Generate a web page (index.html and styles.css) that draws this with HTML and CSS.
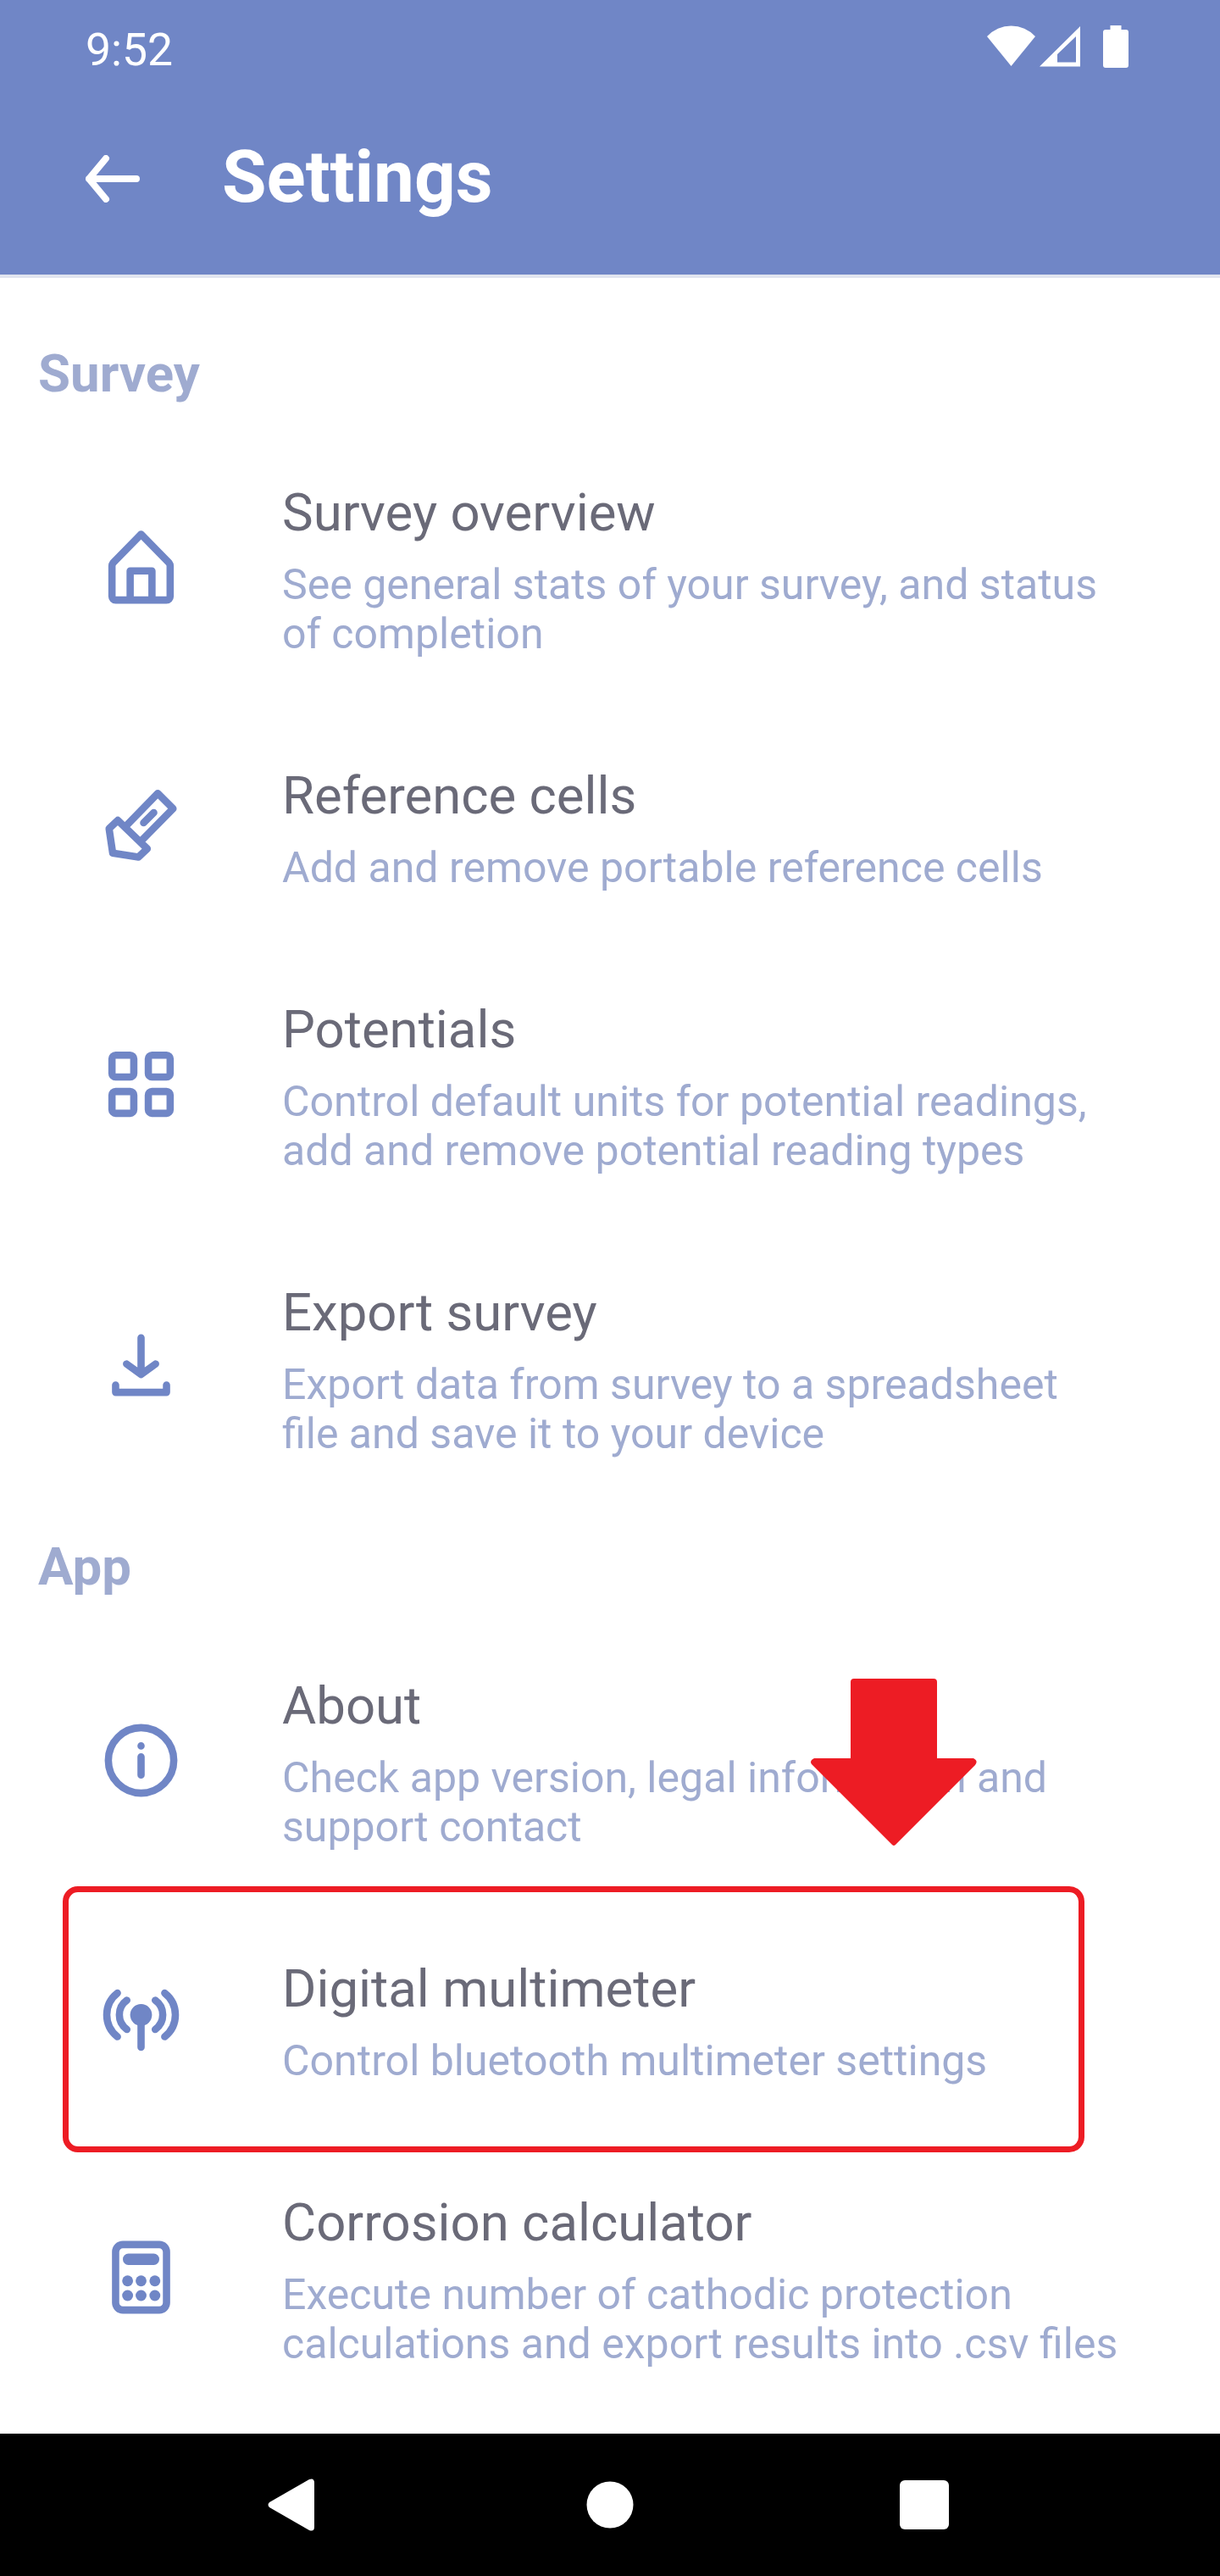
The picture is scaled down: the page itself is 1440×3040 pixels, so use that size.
FILE: index.html
```html
<!DOCTYPE html>
<html lang="en">
<head>
<meta charset="utf-8">
<title>Settings</title>
<link rel="stylesheet" href="styles.css">
</head>
<body>
<div class="screen">
  <header class="header">
    <div class="status">
      <span class="clock">9:52</span>
      <svg class="status-icons" width="170" height="54" viewBox="0 0 170 54" fill="#fff">
        <path d="M0 16A38.700 38.700 0 0 1 57 16L28.500 51Z"/>
        <path fill-rule="evenodd" d="M62 51.500 110 4v47.500ZM83 37v9.500h22V16Z"/>
        <path d="M145.500 3h13v5h5.500a3 3 0 0 1 3 3v39a3 3 0 0 1-3 3h-24a3 3 0 0 1-3-3V11a3 3 0 0 1 3-3h5.500Z"/>
      </svg>
    </div>
    <div class="toolbar">
      <svg class="back" width="64" height="56" viewBox="0 0 64 56"><path d="M24 4 4 28 24 52M4 28H60"/></svg>
      <h1 class="title">Settings</h1>
    </div>
  </header>

  <main class="content">
    <h2 class="section">Survey</h2>
    <div class="item">
      <svg class="icon" viewBox="0 0 24 24"><path d="M12 2.900 4.300 10.800Q4 11.200 4 11.600V20a1 1 0 0 0 1 1h14a1 1 0 0 0 1-1v-8.400q0-.4-.3-.8ZM9 21v-8h6v8"/></svg>
      <div class="text"><div class="name">Survey overview</div><div class="desc">See general stats of your survey, and status<br>of completion</div></div>
    </div>
    <div class="item">
      <svg class="icon" viewBox="0 0 24 24"><path d="M8.200 11.700 16.600 3.100l4.200 4.200-8.500 8.600M5.600 10.500 3.200 12.800l1 6.700 7.100 1.100 2.400-2.300ZM12.700 11.200l2.800-2.800"/></svg>
      <div class="text"><div class="name">Reference cells</div><div class="desc">Add and remove portable reference cells</div></div>
    </div>
    <div class="item">
      <svg class="icon" viewBox="0 0 24 24"><rect x="4" y="4" width="6" height="6" rx="1"/><rect x="14" y="4" width="6" height="6" rx="1"/><rect x="4" y="14" width="6" height="6" rx="1"/><rect x="14" y="14" width="6" height="6" rx="1"/></svg>
      <div class="text"><div class="name">Potentials</div><div class="desc">Control default units for potential readings,<br>add and remove potential reading types</div></div>
    </div>
    <div class="item">
      <svg class="icon" viewBox="0 0 24 24"><path d="M12 3.900V14M8 11.100l4 2.900 4-2.900M5 16.900v2h14v-2"/></svg>
      <div class="text"><div class="name">Export survey</div><div class="desc">Export data from survey to a spreadsheet<br>file and save it to your device</div></div>
    </div>

    <h2 class="section">App</h2>
    <div class="item">
      <svg class="icon" viewBox="0 0 24 24"><circle cx="12" cy="12" r="9"/><path d="M12 11v5M12 8v.01"/></svg>
      <div class="text"><div class="name">About</div><div class="desc">Check app version, legal information and<br>support contact</div></div>
      <svg class="pointer" width="196" height="197" viewBox="0 0 196 197"><path d="M51 0h94q4 0 4 4v90h43q6 3 2 8L100 196q-2 2-4 0L1 101q-3-4 3-7h43V4q0-4 4-4Z"/></svg>
    </div>
    <div class="item marked">
      <svg class="icon" viewBox="0 0 24 24"><path d="M12 10.900v8.900M5.500 4.900a7.600 7.600 0 0 0 0 12M18.500 4.900a7.600 7.600 0 0 1 0 12M8.100 6.900a4.900 4.900 0 0 0 0 8M15.900 6.900a4.900 4.900 0 0 1 0 8"/><circle class="solid" cx="12" cy="10.900" r="3"/></svg>
      <div class="text"><div class="name">Digital multimeter</div><div class="desc">Control bluetooth multimeter settings</div></div>
    </div>
    <div class="item">
      <svg class="icon" viewBox="0 0 24 24"><rect x="5" y="3" width="14" height="18" rx="2"/><g class="solid"><rect x="7" y="5.500" width="10" height="3.100" rx="1.500"/><circle cx="8.300" cy="13" r="1.500"/><circle cx="12" cy="13" r="1.500"/><circle cx="15.800" cy="13" r="1.500"/><circle cx="8.300" cy="17" r="1.500"/><circle cx="12" cy="17" r="1.500"/><circle cx="15.800" cy="17" r="1.500"/></g></svg>
      <div class="text"><div class="name">Corrosion calculator</div><div class="desc">Execute number of cathodic protection<br>calculations and export results into .csv files</div></div>
    </div>
  </main>

  <nav class="navbar">
    <svg width="56" height="62" viewBox="0 0 56 62"><path d="M49 1Q55-1 55 5V57Q55 63 49 61L2 34Q-1 31 2 28Z"/></svg>
    <svg class="home" width="56" height="56" viewBox="0 0 56 56"><circle cx="28" cy="28" r="27.500"/></svg>
    <svg width="58" height="58" viewBox="0 0 58 58"><rect width="58" height="58" rx="6"/></svg>
  </nav>
</div>
</body>
</html>
```
FILE: styles.css
```css
body {
  margin: 0;
  font-family: Roboto, sans-serif;
  background: #fff;
}

.screen {
  width: 1440px;
  height: 3040px;
  display: flex;
  flex-direction: column;
  overflow: hidden;
}

.header {
  box-sizing: border-box;
  height: 328px;
  background: #7086c6;
  border-bottom: 4px solid #e1e4ef;
  color: #fff;
}

.status {
  height: 112px;
  padding: 0 105px 0 101px;
  display: flex;
  justify-content: space-between;
}

.clock {
  padding-top: 25px;
  font-size: 53.5px;
  line-height: 67px;
}

.status-icons {
  margin-top: 27px;
}

.toolbar {
  padding: 43px 0 0 101px;
  height: 112px;
  display: flex;
  align-items: center;
  gap: 97px;
}

.back {
  fill: none;
  stroke: #fff;
  stroke-width: 8;
  stroke-linecap: round;
  stroke-linejoin: round;
}

.title {
  margin: 0 0 4px;
  font-size: 85.4px;
  line-height: 98px;
  font-weight: 700;
}

.content {
  flex: 1;
  padding-top: 47px;
}

.section {
  margin: 0;
  height: 130px;
  padding-left: 45px;
  font-size: 61.8px;
  line-height: 132px;
  font-weight: 700;
  color: #9fabd0;
}

.item {
  position: relative;
  display: flex;
  align-items: center;
  padding: 62px 0 62px 115px;
}

.icon {
  width: 103px;
  height: 103px;
  margin: -5px 115px 0 0;
  fill: none;
  stroke: #7086c6;
  stroke-width: 2;
  stroke-linecap: round;
  stroke-linejoin: round;
}

.solid {
  fill: #7086c6;
  stroke: none;
}

.text {
  padding-top: 1px;
}

.name {
  font-size: 61.7px;
  line-height: 74px;
  color: #6a6a78;
}

.desc {
  margin-top: 19px;
  font-size: 50.05px;
  line-height: 58px;
  color: #9fabd0;
}

.pointer {
  position: absolute;
  left: 957px;
  top: 68px;
  fill: #ed1c24;
}

.marked::after {
  content: "";
  position: absolute;
  box-sizing: border-box;
  left: 74px;
  top: -21px;
  width: 1206px;
  height: 314px;
  border: 7px solid #ed1c24;
  border-radius: 18px;
}

.navbar {
  height: 168px;
  padding: 0 320px 0 316px;
  display: flex;
  align-items: center;
  justify-content: space-between;
  background: #000;
  fill: #fff;
}

.home {
  margin-left: 6px;
}
```
